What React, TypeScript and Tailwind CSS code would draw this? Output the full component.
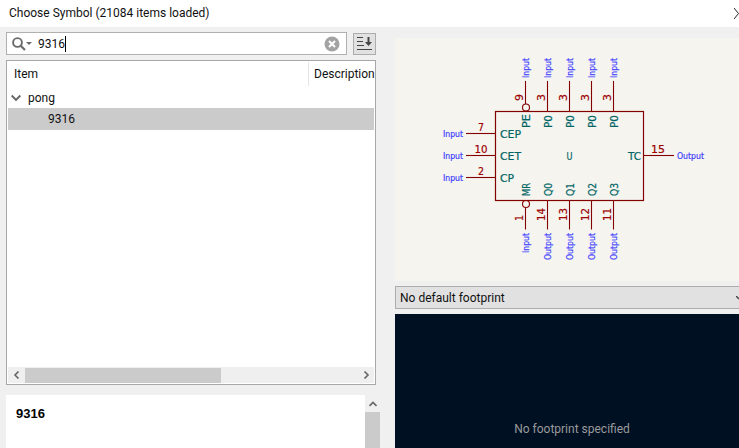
const ui = "font-['Roboto',sans-serif] text-[12px] text-[#111]";

const inputs = [525.5, 547.5, 569.5, 591.5, 613.5];
const topNames = ["PE", "P0", "P0", "P0", "P0"];
const topNums = ["9", "3", "3", "3", "3"];
const botNames = ["MR", "Q0", "Q1", "Q2", "Q3"];
const botNums = ["1", "14", "13", "12", "11"];

const MAROON = "#840000";
const RED = "#9c0000";
const TEAL = "#006464";
const BLUE = "#4040ff";
const FONT = "'DejaVu Sans', sans-serif";

const VText = (p: { x: number; y: number; t: string; c: string; len: number; anchor?: "start" | "end" | "middle"; size?: number }) => (
  <text
    transform={`translate(${p.x} ${p.y}) rotate(-90)`}
    fill={p.c}
    stroke={p.c}
    strokeWidth="0.2"
    fontFamily={FONT}
    fontSize={p.size ?? 9}
    textAnchor={p.anchor ?? "start"}
    textLength={p.len}
    lengthAdjust="spacingAndGlyphs"
  >
    {p.t}
  </text>
);

const HText = (p: { x: number; y: number; t: string; c: string; len: number; anchor?: "start" | "end" | "middle"; size?: number }) => (
  <text
    x={p.x}
    y={p.y}
    fill={p.c}
    stroke={p.c}
    strokeWidth="0.2"
    fontFamily={FONT}
    fontSize={p.size ?? 9}
    textAnchor={p.anchor ?? "start"}
    textLength={p.len}
    lengthAdjust="spacingAndGlyphs"
  >
    {p.t}
  </text>
);

const Symbol = () => (
  <svg width="344" height="243" viewBox="395 38 344 243" className="block">
    <rect x="495.5" y="111.5" width="148" height="89" fill="none" stroke={MAROON} strokeWidth="1.2" />
    {inputs.map((x, i) => (
      <g key={x}>
        <line x1={x} y1="81" x2={x} y2={i === 0 ? 104 : 111} stroke={MAROON} strokeWidth="1.1" />
        <line x1={x} y1={i === 0 ? 208 : 200} x2={x} y2="229.5" stroke={MAROON} strokeWidth="1.1" />
        <VText x={x + 3.5} y={78} t="Input" c={BLUE} len={20} size={8.5} />
        <VText x={x - 3} y={101} t={topNums[i]} c={RED} len={7} size={11} />
        <VText x={x + 4} y={128} t={topNames[i]} c={TEAL} len={i === 0 ? 14 : 13} size={11} />
        <VText x={x + 4} y={196} t={botNames[i]} c={TEAL} len={13} size={11} />
        <VText x={x - 3} y={221} t={botNums[i]} c={RED} len={botNums[i].length === 1 ? 6 : 13} size={11} />
        <VText x={x + 3.5} y={233} t={i === 0 ? "Input" : "Output"} c={BLUE} len={i === 0 ? 20 : 27} anchor="end" size={8.5} />
      </g>
    ))}
    <circle cx="526" cy="107.5" r="3.5" fill="none" stroke={MAROON} strokeWidth="1.1" />
    <circle cx="526" cy="204" r="3.5" fill="none" stroke={MAROON} strokeWidth="1.1" />

    {[
      { y: 133.5, num: "7", name: "CEP", nameLen: 21, numLen: 6 },
      { y: 155.5, num: "10", name: "CET", nameLen: 21, numLen: 13 },
      { y: 177.5, num: "2", name: "CP", nameLen: 14, numLen: 6 },
    ].map((p) => (
      <g key={p.num}>
        <line x1="466" y1={p.y} x2="495" y2={p.y} stroke={MAROON} strokeWidth="1.1" />
        <HText x={443} y={p.y + 3} t="Input" c={BLUE} len={20} size={8.5} />
        <HText x={481} y={p.y - 3} t={p.num} c={RED} len={p.numLen} anchor="middle" size={11} />
        <HText x={500} y={p.y + 4} t={p.name} c={TEAL} len={p.nameLen} size={11} />
      </g>
    ))}

    <line x1="643" y1="155.5" x2="674" y2="155.5" stroke={MAROON} strokeWidth="1.1" />
    <HText x={628} y={159.5} t="TC" c={TEAL} len={13} size={11} />
    <HText x={651} y={152.5} t="15" c={RED} len={14} size={11} />
    <HText x={677} y={159} t="Output" c={BLUE} len={27} size={8.5} />
    <HText x={569.5} y={159.5} t="U" c={TEAL} len={6} anchor="middle" size={11} />
  </svg>
);

const SearchIcon = () => (
  <svg width="20" height="14" viewBox="0 0 20 14" className="shrink-0">
    <circle cx="5.5" cy="5.5" r="4.4" fill="none" stroke="#6a6a6a" strokeWidth="1.9" />
    <line x1="8.5" y1="8.5" x2="13" y2="13" stroke="#6a6a6a" strokeWidth="2.2" />
    <path d="M14 5h6l-3 3z" fill="#6a6a6a" />
  </svg>
);

const ClearIcon = () => (
  <svg width="16" height="16" viewBox="0 0 16 16" className="shrink-0">
    <circle cx="8" cy="8" r="7.5" fill="#a3a3a3" />
    <path d="M5 5l6 6M11 5l-6 6" stroke="#fff" strokeWidth="2" />
  </svg>
);

const SortIcon = () => (
  <svg width="16" height="16" viewBox="0 0 16 16">
    <path d="M0 1.5h6M0 5.5h6M0 9.5h7M0 13.5h15" stroke="#444" strokeWidth="1.2" />
    <path d="M11.5 1v7" stroke="#444" strokeWidth="2" />
    <path d="M8 6l3.5 4 3.5-4z" fill="#444" />
  </svg>
);

const Chevron = ({ d, size = 8 }: { d: string; size?: number }) => (
  <svg width={size} height={size} viewBox="0 0 8 8" className="shrink-0">
    <path d={d} fill="none" stroke="#666" strokeWidth="1.6" />
  </svg>
);

export default function App() {
  return (
    <div className={`${ui} w-[739px] h-[448px] overflow-hidden flex flex-col bg-[#f0f0f0]`}>
      <div className="h-[27px] shrink-0 bg-white flex items-center justify-between pl-[9px] pb-[2px]">
        <span className="leading-none">Choose Symbol (21084 items loaded)</span>
        <svg width="5" height="11" viewBox="0 0 5 11" className="mt-px">
          <path d="M0 0l4.5 5.5L0 11" fill="none" stroke="#222" strokeWidth="1" />
        </svg>
      </div>

      <div className="flex flex-1 min-h-0">
        <div className="w-[395px] shrink-0 pl-[6px] pt-[5px] flex flex-col">
          <div className="flex gap-[6px] w-[370px] h-[23px] shrink-0">
            <div className="w-[341px] h-[23px] bg-white border border-[#b0b0b0] flex items-center pl-[5px] pr-[6px]">
              <SearchIcon />
              <span className="ml-[6px] leading-none">9316</span>
              <span className="w-px h-[16px] bg-black" />
              <span className="flex-1" />
              <ClearIcon />
            </div>
            <div className="w-[23px] h-[22px] mt-px bg-[#e1e1e1] border border-[#adadad] flex items-center justify-center">
              <SortIcon />
            </div>
          </div>

          <div className="w-[370px] h-[325px] mt-[5px] shrink-0 bg-white border border-[#a8a8a8] flex flex-col px-px">
            <div className="h-[26px] shrink-0 flex items-center">
              <span className="w-[301px] shrink-0 pl-[6px] h-[24px] flex items-center border-r border-[#e5e5e5]">Item</span>
              <span className="pl-[5px] whitespace-nowrap flex-1">Description</span>
            </div>
            <div className="h-[21px] shrink-0 flex items-center pl-[3px]">
              <Chevron d="M0.5 2l3.5 3.5L7.5 2" size={10} />
              <span className="ml-[7px]">pong</span>
            </div>
            <div className="h-[22px] shrink-0 flex items-center bg-[#cbcbcb] pl-[40px]">9316</div>
            <div className="flex-1" />
            <div className="h-[16px] shrink-0 bg-[#efefef] flex items-center justify-between mb-[1px]">
              <div className="flex items-center h-full">
                <span className="w-[17px] flex justify-center">
                  <Chevron d="M5.5 0.5L2 4l3.5 3.5" />
                </span>
                <div className="w-[196px] h-[15px] bg-[#cbcbcb]" />
              </div>
              <span className="w-[17px] flex justify-center">
                <Chevron d="M2.5 0.5L6 4 2.5 7.5" />
              </span>
            </div>
          </div>

          <div className="flex mt-[10px] flex-1 min-h-0 w-[374px]">
            <div className="w-[359px] bg-white pl-[10px] pt-[9px]">
              <span className="font-['Liberation_Sans',sans-serif] font-bold text-[13px] text-black">9316</span>
            </div>
            <div className="w-[15px] flex flex-col">
              <div className="h-[17px] flex items-center justify-center">
                <Chevron d="M0.5 6L4 2.5 7.5 6" />
              </div>
              <div className="flex-1 bg-[#cbcbcb]" />
            </div>
          </div>
        </div>

        <div className="flex-1 min-w-0 flex flex-col pt-[11px]">
          <div className="h-[243px] shrink-0 bg-[#f5f4ef]">
            <Symbol />
          </div>
          <div className="h-[23px] mt-[5px] shrink-0 bg-[#e1e1e1] border border-r-0 border-[#adadad] flex items-center justify-between pl-[4px]">
            <span>No default footprint</span>
            <svg width="3" height="4" viewBox="0 0 3 4">
              <path d="M0 0l3 3" stroke="#444" strokeWidth="1.5" />
            </svg>
          </div>
          <div className="mt-[5px] flex-1 bg-[#001023] flex items-end justify-center pb-[12px] pl-[10px]">
            <span className="text-[#9a9a9a] leading-none pb-[1px]">No footprint specified</span>
          </div>
        </div>
      </div>
    </div>
  );
}
